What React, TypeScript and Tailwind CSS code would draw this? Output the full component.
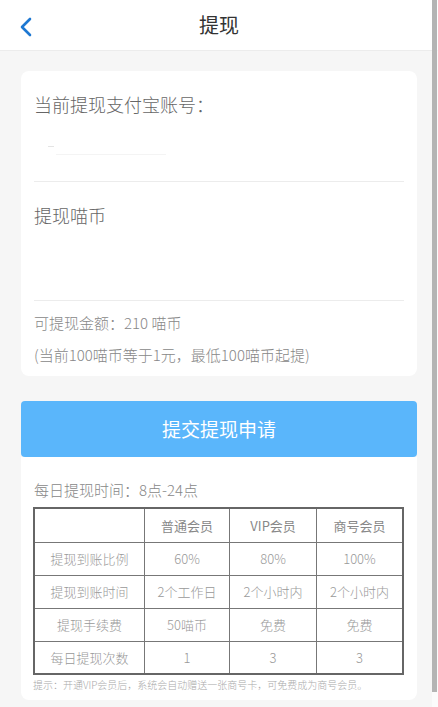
import React from 'react';

const rows: string[][] = [
  ['提现到账比例', '60%', '80%', '100%'],
  ['提现到账时间', '2个工作日', '2个小时内', '2个小时内'],
  ['提现手续费', '50喵币', '免费', '免费'],
  ['每日提现次数', '1', '3', '3'],
];

const font = { fontFamily: '"Noto Sans CJK SC", "Noto Sans", sans-serif' };

const App = () => {
  return (
    <div className="relative w-[438px] h-[707px] overflow-hidden bg-[#f6f6f6] font-light" style={font}>
      <div className="w-full h-full flex flex-col">
        {/* Header */}
        <header className="relative h-[51px] bg-white border-b border-[#ececec] flex items-center justify-center shrink-0">
          <svg className="absolute left-[19px] top-[17px]" width="14" height="20" viewBox="0 0 14 20">
            <path d="M11 2 L3 10 L11 18" fill="none" stroke="#1e78d2" strokeWidth="2.6" strokeLinecap="round" strokeLinejoin="round" />
          </svg>
          <h1 className="text-[20px] text-[#333] font-normal leading-none">提现</h1>
        </header>

        {/* Account card */}
        <div className="mt-[20px] mx-[21px] bg-white rounded-lg px-[13px] pt-[20px] pb-[10px]">
          <p className="text-[18px] text-[#666] leading-[26px]">当前提现支付宝账号：</p>
          <div className="h-[64px] flex items-center pl-[14px] gap-[2px]">
            <span className="block w-[6px] h-[1px] bg-[#e4e4e4] mb-[6px]" />
            <span className="block w-[110px] h-[1px] bg-[#f4f4f4] mt-[10px]" />
          </div>
          <div className="h-px bg-[#ececec]" />
          <p className="mt-[20px] text-[18px] text-[#666] leading-[26px]">提现喵币</p>
          <div className="h-[72px]" />
          <div className="h-px bg-[#ececec]" />
          <p className="mt-[11px] text-[15px] text-[#888] leading-[22px]">可提现金额：210 喵币</p>
          <p className="mt-[10px] text-[15px] text-[#888] leading-[22px]">(当前100喵币等于1元，最低100喵币起提)</p>
        </div>

        {/* Submit */}
        <button className="mt-[25px] mx-[21px] h-[56px] bg-[#5ab6fb] rounded-[4px] text-white text-[19px] font-normal">
          提交提现申请
        </button>

        {/* Rules card */}
        <div className="mx-[21px] bg-white rounded-b-lg px-[12px] pt-[23px] pb-[8px]">
          <p className="text-[15px] text-[#888] leading-[20px] pl-[1px]">每日提现时间：8点-24点</p>
          <table className="mt-[7px] w-[371px] border-collapse border-2 border-[#666] text-[13px] text-[#999] text-center">
            <thead>
              <tr className="h-[34px]">
                <th className="w-[111px] border border-[#777] font-normal" />
                <th className="w-[86px] border border-[#777] font-normal text-[#888]">普通会员</th>
                <th className="w-[87px] border border-[#777] font-normal text-[#888]">VIP会员</th>
                <th className="w-[87px] border border-[#777] font-normal text-[#888]">商号会员</th>
              </tr>
            </thead>
            <tbody>
              {rows.map((row) => (
                <tr key={row[0]} className="h-[33px]">
                  {row.map((cell, i) => (
                    <td key={i} className="border border-[#777] p-0">{cell}</td>
                  ))}
                </tr>
              ))}
            </tbody>
          </table>
          <p className="mt-[3px] text-[10px] text-[#aaa] leading-[14px]">
            提示：开通VIP会员后，系统会自动赠送一张商号卡，可免费成为商号会员。
          </p>
        </div>
      </div>

      {/* Scrollbar */}
      <div className="absolute left-[432px] top-0 w-[6px] h-full bg-white/60">
        <div className="w-[5px] h-[692px] bg-[#b4b4b4]" />
      </div>
    </div>
  );
};

export default App;
